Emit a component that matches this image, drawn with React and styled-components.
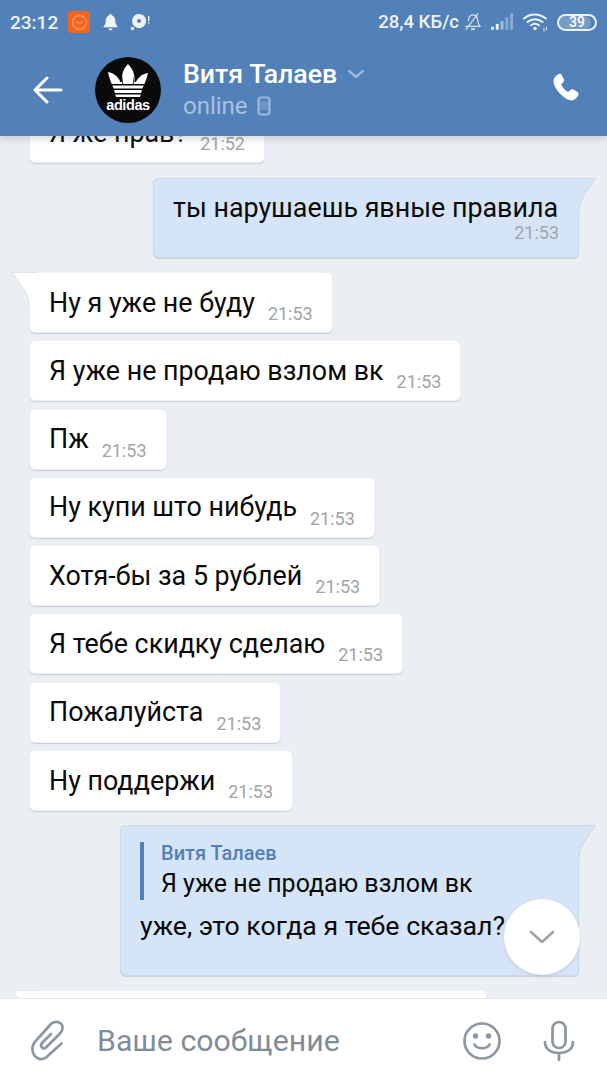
import React from 'react';
import styled, { createGlobalStyle } from 'styled-components';

const GlobalStyle = createGlobalStyle`
    html, body { margin: 0; padding: 0; }
    body { font-family: Roboto, "Liberation Sans", sans-serif; background: #ebeff3; }
`

const messages = [
    { text: 'Ну я уже не буду', time: '21:53', tail: true },
    { text: 'Я уже не продаю взлом вк', time: '21:53' },
    { text: 'Пж', time: '21:53' },
    { text: 'Ну купи што нибудь', time: '21:53' },
    { text: 'Хотя-бы за 5 рублей', time: '21:53' },
    { text: 'Я тебе скидку сделаю', time: '21:53' },
    { text: 'Пожалуйста', time: '21:53' },
    { text: 'Ну поддержи', time: '21:53' },
]

export default function App() {
    return (
        <Screen>
            <GlobalStyle />
            <Header>
                <StatusBar>
                    <StatusLeft>
                        <Clock>23:12</Clock>
                        <OrangeBadge>
                            <svg width="17" height="17" viewBox="0 0 16 16" fill="none" stroke="#f98f58" strokeWidth="1.6">
                                <circle cx="8" cy="8" r="6.500" />
                                <path d="M5 7c1 2 5 2 6 0" />
                            </svg>
                        </OrangeBadge>
                        <BellIcon />
                        <DiscIcon />
                    </StatusLeft>
                    <StatusRight>
                        <Speed>28,4 КБ/с</Speed>
                        <BellOffIcon />
                        <SignalIcon />
                        <WifiIcon />
                        <Battery><BatteryFill /><BatteryLabel>39</BatteryLabel></Battery>
                    </StatusRight>
                </StatusBar>
                <AppBar>
                    <BackButton>
                        <svg width="30" height="28" viewBox="0 0 30 28" fill="none" stroke="#fff" strokeWidth="3" strokeLinecap="round" strokeLinejoin="round">
                            <path d="M2 14h26M14 2L2 14l12 12" />
                        </svg>
                    </BackButton>
                    <Avatar>
                        <svg width="42" height="34" viewBox="0 0 42 34" fill="#fff">
                            <path d="M21 0C16 5 14.500 11 15 17l1.500 16H26l1.500-16C28 11 26 5 21 0z" />
                            <path d="M1 8c6 1 11 5 13 12l2 13h-4C8 28 3 18 1 8z" />
                            <path d="M41 9c-6 1-11 5-13 11l-2 13h4c4-5 9-15 11-24z" />
                            <path d="M5 18h32l-4 15H9z" />
                            <path d="M2 20h38v1.400H2zM2 24.500h38v1.400H2zM2 29h38v1.400H2z" fill="#0a0a0a" />
                            <path d="M14.800 10l1.500 10h-1zM27.200 10l-1.500 10h1z" fill="#0a0a0a" />
                        </svg>
                        <AvatarLabel>adidas</AvatarLabel>
                    </Avatar>
                    <TitleBlock>
                        <NameRow>
                            <Name>Витя Талаев</Name>
                            <svg width="18" height="10" viewBox="0 0 18 10" fill="none" stroke="#9db8d9" strokeWidth="2.4" strokeLinecap="round" strokeLinejoin="round">
                                <path d="M2 2l7 6 7-6" />
                            </svg>
                        </NameRow>
                        <OnlineRow>
                            <span>online</span>
                            <PhoneMark />
                        </OnlineRow>
                    </TitleBlock>
                    <CallButton>
                        <svg width="30" height="30" viewBox="0 0 30 30" fill="#fff">
                            <path d="M7.500 1.200c1.300-.7 2.600-.3 3.300 1l2 4c.6 1.200.3 2.300-.6 3.100l-1.500 1.300c-.4.400-.5.900-.2 1.500 1.200 2.700 3.300 5 6 6.600.5.300 1 .2 1.400-.2l1.500-1.500c.9-.9 2-1 3.100-.4l3.900 2.300c1.200.7 1.500 2 .9 3.200-1.100 2.300-2.900 4.600-5.400 5.200-3 .7-7.500-1.200-11.400-5.200C6 17.900 2.800 12.600 2.500 8.500c-.2-3 2.400-5.900 5-7.300z" />
                        </svg>
                    </CallButton>
                </AppBar>
            </Header>

            <Feed>
                <Scroller>
                    <Incoming>
                        <BubbleText>Я же прав?</BubbleText>
                        <Time>21:52</Time>
                    </Incoming>
                    <Outgoing>
                        <BubbleText>ты нарушаешь явные правила</BubbleText>
                        <OutTime>21:53</OutTime>
                        <OutTail />
                    </Outgoing>
                    <IncomingList>
                        {messages.map((m) => (
                            <Incoming key={m.text}>
                                {m.tail && <InTail />}
                                <BubbleText>{m.text}</BubbleText>
                                <Time>{m.time}</Time>
                            </Incoming>
                        ))}
                    </IncomingList>
                    <ReplyBubble>
                        <Quote>
                            <QuoteName>Витя Талаев</QuoteName>
                            <QuoteText>Я уже не продаю взлом вк</QuoteText>
                        </Quote>
                        <ReplyText>уже, это когда я тебе сказал?</ReplyText>
                        <OutTail />
                    </ReplyBubble>
                    <NextBubble>
                        <InTail />
                    </NextBubble>
                </Scroller>
                <ScrollDown>
                    <svg width="28" height="16" viewBox="0 0 28 16" fill="none" stroke="#9aa3ad" strokeWidth="2.600" strokeLinecap="round" strokeLinejoin="round">
                        <path d="M3 3l11 10 11-10" />
                    </svg>
                </ScrollDown>
            </Feed>

            <Composer>
                <ClipIcon width="36" height="42" viewBox="14 10 36 42" fill="none" stroke="#8c97a3" strokeWidth="2.700" strokeLinecap="round" strokeLinejoin="round">
                    <path d="M46.500 33.500L31 47.500C25 52 17 46.500 17.500 38c.2-4 2.500-6.500 4.500-8.500L36 14c4-4 11-2 11.500 3 .3 3-.5 4.500-2.500 6.500L31 37.500c-3 2.500-6.500-1.500-4-4.500l9-9" />
                </ClipIcon>
                <Placeholder>Ваше сообщение</Placeholder>
                <Smiley>
                    <svg width="40" height="40" viewBox="0 0 40 40" fill="none" stroke="#8c97a3" strokeWidth="2.700" strokeLinecap="round">
                        <circle cx="20" cy="20" r="17.500" />
                        <path d="M12.500 23.500c2.500 5 12.500 5 15 0" />
                        <circle cx="13.500" cy="15" r="1.400" fill="#8c97a3" />
                        <circle cx="26.500" cy="15" r="1.400" fill="#8c97a3" />
                    </svg>
                </Smiley>
                <Mic>
                    <svg width="34" height="42" viewBox="0 0 34 42" fill="none" stroke="#8c97a3" strokeWidth="2.700" strokeLinecap="round">
                        <rect x="10.500" y="2" width="13" height="26" rx="6.500" />
                        <path d="M3 22c0 8 7 11 14 11s14-3 14-11M17 33v7" />
                    </svg>
                </Mic>
            </Composer>
        </Screen>
    )
}

function BellIcon() {
    return (
        <StatusGlyph width="15" height="18" viewBox="0 0 15 18" fill="#eef3f9">
            <path d="M7.500 1c.8 0 1.200.5 1.200 1.200C11 3 12.300 5 12.300 7.500c0 3 .6 4.500 2.200 6v.8H.5v-.8c1.600-1.500 2.200-3 2.200-6C2.700 5 4 3 6.300 2.200 6.300 1.500 6.700 1 7.500 1z" />
            <path d="M5.500 15.500h4a2 2 0 0 1-4 0z" />
        </StatusGlyph>
    )
}

function DiscIcon() {
    return (
        <DiscGlyph width="20" height="20" viewBox="0 0 20 20" fill="#eef3f9">
            <path fillRule="evenodd" d="M9 2a7 7 0 1 1-5 11.800A7 7 0 0 1 9 2zm0 5a2 2 0 1 0 0 4 2 2 0 0 0 0-4z" />
            <circle cx="2.500" cy="16.500" r="1.800" />
            <rect x="18" y="4" width="1.400" height="5" />
            <rect x="18" y="10" width="1.400" height="1.500" />
        </DiscGlyph>
    )
}

function BellOffIcon() {
    return (
        <StatusGlyph width="18" height="20" viewBox="0 0 19 20" fill="none" stroke="#d9e4f1" strokeWidth="1.300" strokeLinejoin="round">
            <path d="M4.500 9c.3-4 2.500-6.500 5-6.500 2.800 0 4.800 2.500 5 6 .1 2.500.8 4.500 2.500 6H1.500" />
            <path d="M2 18L15 1" />
            <path d="M7.500 17.500h4" strokeWidth="2" />
        </StatusGlyph>
    )
}

function SignalIcon() {
    return (
        <StatusGlyph width="23" height="18" viewBox="0 0 24 18">
            <rect x="0" y="14" width="3" height="3" fill="#eef3f9" />
            <rect x="5" y="11" width="3" height="6" fill="#eef3f9" />
            <rect x="10" y="8" width="3" height="9" fill="#9fbbdb" />
            <rect x="15" y="4" width="3" height="13" fill="#8aabd1" />
            <rect x="20" y="0" width="3" height="17" fill="#8aabd1" />
        </StatusGlyph>
    )
}

function WifiIcon() {
    return (
        <StatusGlyph width="25" height="20" viewBox="0 0 25 20" fill="none" stroke="#eef3f9" strokeWidth="2" strokeLinecap="round">
            <path d="M1 6.500c6-5.500 15-5.500 22 0" />
            <path d="M4.500 10c4.500-3.800 10.500-3.800 15 0" />
            <path d="M8 13.300c2.500-2 5.500-2 8 0" />
            <circle cx="12" cy="16.500" r="1.800" fill="#eef3f9" stroke="none" />
            <path d="M21 16v3M23.500 15v3" strokeWidth="1.200" stroke="#c9d8ea" />
        </StatusGlyph>
    )
}

function PhoneMark() {
    return (
        <svg width="14" height="20" viewBox="0 0 14 20" fill="none" stroke="#9db8d9" strokeWidth="2.200">
            <rect x="1.500" y="1.500" width="11" height="17" rx="2.500" />
            <rect x="1.500" y="5" width="11" height="9" fill="#9db8d9" fillOpacity=".35" stroke="none" />
        </svg>
    )
}

function InTail() {
    return (
        <TailLeft width="25" height="36" viewBox="0 0 25 36">
            <path d="M0.500 0H25V36H17C17 27 15 22 12 17.500L0.500 0.500z" fill="#fff" />
            <path d="M0.500 0.500H25M0.500 0.500L12 17.500C15 22 17 27 17 35" fill="none" stroke="#dde3ea" strokeWidth="1" />
        </TailLeft>
    )
}

function OutTail() {
    return (
        <TailRight width="25" height="36" viewBox="-6 0 25 36">
            <path d="M18.500 0H-6V36H2C2 27 4 22 7 17.500L18.500 0.500z" fill="#d5e5f7" />
            <path d="M2 35C2 27 4 22 7 17.500L18.500 .5H-6" fill="none" stroke="#c9d9eb" strokeWidth="1" />
        </TailRight>
    )
}

const Screen = styled.div`
    position: relative;
    width: 607px;
    height: 1080px;
    display: flex;
    flex-direction: column;
    overflow: hidden;
    background: #ebeff3;
`

const Header = styled.header`
    position: relative;
    z-index: 2;
    flex: none;
    height: 136px;
    background: #5181b8;
    box-shadow: 0 2px 8px rgba(60, 70, 85, 0.25);
    color: #fff;
`

const StatusBar = styled.div`
    height: 44px;
    display: flex;
    align-items: center;
    justify-content: space-between;
    padding: 0 10px 0 10px;
`

const StatusLeft = styled.div`
    display: flex;
    align-items: center;
`

const StatusRight = styled.div`
    display: flex;
    align-items: center;
    gap: 9px;
`

const StatusGlyph = styled.svg`
    display: block;
    flex: none;
`

const DiscGlyph = styled(StatusGlyph)`
    margin-left: 12px;
`

const Clock = styled.span`
    font-size: 19px;
    font-weight: 500;
    color: #eef3f9;
    width: 58px;
`

const OrangeBadge = styled.span`
    width: 22px;
    height: 22px;
    border-radius: 3px;
    background: #f4641f;
    display: flex;
    align-items: center;
    justify-content: center;
    margin-right: 13px;
`

const Speed = styled.span`
    font-size: 18.5px;
    font-weight: 500;
    color: #eef3f9;
    margin-right: -4px;
`

const Battery = styled.span`
    position: relative;
    width: 40px;
    height: 17px;
    box-sizing: border-box;
    border: 2px solid #eef3f9;
    border-radius: 9px;
    display: flex;
    align-items: center;
    justify-content: center;
    overflow: hidden;
`

const BatteryFill = styled.span`
    position: absolute;
    left: 0;
    top: 0;
    bottom: 0;
    width: 88%;
    background: rgba(255, 255, 255, 0.22);
    border-radius: 0 6px 6px 0;
`

const BatteryLabel = styled.span`
    position: relative;
    font-size: 14px;
    font-weight: 500;
    line-height: 1;
    color: #fff;
`

const AppBar = styled.div`
    height: 92px;
    display: flex;
    align-items: center;
    padding: 0 26px 0 33px;
`

const BackButton = styled.div`
    display: flex;
    width: 62px;
    flex: none;
    margin-top: -1px;
`

const Avatar = styled.div`
    width: 66px;
    height: 66px;
    flex: none;
    border-radius: 50%;
    background: #0a0a0a;
    display: flex;
    flex-direction: column;
    align-items: center;
    padding-top: 7px;
    box-sizing: border-box;
    margin-top: -1px;
`

const AvatarLabel = styled.span`
    font-family: "Liberation Sans", sans-serif;
    font-size: 14.5px;
    line-height: 14px;
    font-weight: 700;
    letter-spacing: -0.4px;
    color: #fff;
`

const TitleBlock = styled.div`
    flex: 1;
    margin-left: 22px;
    display: flex;
    flex-direction: column;
    gap: 2px;
`

const NameRow = styled.div`
    display: flex;
    align-items: center;
    gap: 10px;
`

const Name = styled.span`
    font-size: 26.7px;
    line-height: 30px;
    font-weight: 500;
    color: #fff;
`

const OnlineRow = styled.div`
    display: flex;
    align-items: center;
    gap: 9px;
    font-size: 24px;
    line-height: 30px;
    color: #a8c2e0;
`

const CallButton = styled.div`
    display: flex;
    flex: none;
    margin-top: -4px;
`

const Feed = styled.main`
    position: relative;
    flex: 1;
    min-height: 0;
    overflow: hidden;
`

const Scroller = styled.div`
    display: flex;
    flex-direction: column;
    align-items: flex-start;
    margin-top: -34px;
    padding: 0 28px 0 29px;
`

const Bubble = styled.div`
    position: relative;
    box-sizing: border-box;
    border-radius: 6px;
    box-shadow: 0 1px 1px rgba(120, 135, 155, 0.3), inset 0 0 0 1px rgba(120, 135, 155, 0.12);
`

const Incoming = styled(Bubble)`
    height: 61px;
    display: flex;
    align-items: center;
    padding: 0 20px;
    gap: 13px;
    background: #fff;
`

const BubbleText = styled.span`
    font-size: 26.85px;
    line-height: 30px;
    color: #0a0a0a;
    white-space: nowrap;
`

const Time = styled.span`
    font-size: 18px;
    line-height: 20px;
    color: #a0a4a8;
    align-self: flex-end;
    margin-bottom: 9px;
`

const OutTime = styled(Time)`
    align-self: flex-end;
    margin: 0;
`

const Outgoing = styled(Bubble)`
    align-self: flex-end;
    width: 426px;
    height: 80px;
    margin-top: 15px;
    padding: 15px 20px 9px;
    display: flex;
    flex-direction: column;
    background: #d5e5f7;
`

const IncomingList = styled.div`
    display: flex;
    flex-direction: column;
    align-items: flex-start;
    gap: 7.3px;
    margin-top: 14px;
`

const ReplyBubble = styled(Bubble)`
    align-self: flex-end;
    width: 459px;
    height: 151px;
    margin-top: 14px;
    padding: 17px 20px;
    background: #d5e5f7;
`

const Quote = styled.div`
    border-left: 4px solid #5181b8;
    padding-left: 17px;
    height: 58px;
`

const QuoteName = styled.div`
    font-size: 20px;
    line-height: 22px;
    font-weight: 500;
    color: #5181b8;
`

const QuoteText = styled.div`
    font-size: 25px;
    line-height: 30px;
    color: #0a0a0a;
    margin-top: 5px;
`

const ReplyText = styled.div`
    font-size: 26.7px;
    line-height: 30px;
    color: #0a0a0a;
    margin-top: 11px;
    white-space: nowrap;
`

const NextBubble = styled(Bubble)`
    width: 458px;
    height: 40px;
    margin-top: 14px;
    background: #fff;
`

const TailLeft = styled.svg`
    position: absolute;
    left: -17px;
    top: 0;
`

const TailRight = styled.svg`
    position: absolute;
    right: -17px;
    top: 0;
`

const ScrollDown = styled.div`
    position: absolute;
    left: 504px;
    top: 763px;
    width: 76px;
    height: 76px;
    border-radius: 50%;
    background: #fff;
    box-shadow: 0 1px 3px rgba(90, 100, 115, 0.2);
    display: flex;
    align-items: center;
    justify-content: center;
`

const Composer = styled.footer`
    position: relative;
    z-index: 2;
    flex: none;
    height: 82px;
    box-sizing: border-box;
    border-top: 1px solid #e3e6ea;
    background: #fff;
    display: flex;
    align-items: center;
    padding: 0 31px 0 29px;
`

const ClipIcon = styled.svg`
    flex: none;
    margin-top: 3px;
`

const Placeholder = styled.span`
    flex: 1;
    margin-left: 32px;
    margin-top: 2px;
    font-size: 30.3px;
    color: #818c99;
`

const Smiley = styled.div`
    display: flex;
    margin-right: 40px;
    margin-top: 2px;
`

const Mic = styled.div`
    display: flex;
    margin-top: 2px;
`
